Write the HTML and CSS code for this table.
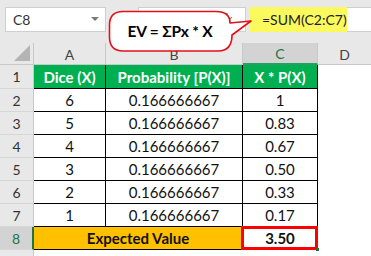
FILE: index.html
```html
<!DOCTYPE html>
<html>
<head>
<meta charset="utf-8">
<link rel="stylesheet" href="styles.css">
</head>
<body>
<div class="app">
  <div class="topbar">
    <div class="namebox"><span>C8</span><span class="arrow"></span></div>
    <div class="fxbox"><span class="fx">fx</span></div>
    <div class="formula"><span class="hl">=SUM(C2:C7)</span></div>
  </div>
  <div class="sheet">
    <div class="corner"><svg width="17" height="17" viewBox="0 0 17 17"><polygon points="0,16 16,0 16,16" fill="#b4b4b4"/></svg></div>
    <div class="colhdr">A</div>
    <div class="colhdr">B</div>
    <div class="colhdr sel">C</div>
    <div class="colhdr last">D</div>

    <div class="rowhdr r1">1</div>
    <div class="cell head r1">Dice (X)</div>
    <div class="cell head r1">Probability [P(X)]</div>
    <div class="cell head r1">X * P(X)</div>
    <div class="blank r1"></div>

    <div class="rowhdr">2</div>
    <div class="cell">6</div>
    <div class="cell">0.166666667</div>
    <div class="cell">1</div>
    <div class="blank"></div>

    <div class="rowhdr">3</div>
    <div class="cell">5</div>
    <div class="cell">0.166666667</div>
    <div class="cell">0.83</div>
    <div class="blank"></div>

    <div class="rowhdr">4</div>
    <div class="cell">4</div>
    <div class="cell">0.166666667</div>
    <div class="cell">0.67</div>
    <div class="blank"></div>

    <div class="rowhdr">5</div>
    <div class="cell">3</div>
    <div class="cell">0.166666667</div>
    <div class="cell">0.50</div>
    <div class="blank"></div>

    <div class="rowhdr">6</div>
    <div class="cell">2</div>
    <div class="cell">0.166666667</div>
    <div class="cell">0.33</div>
    <div class="blank"></div>

    <div class="rowhdr">7</div>
    <div class="cell">1</div>
    <div class="cell">0.166666667</div>
    <div class="cell">0.17</div>
    <div class="blank"></div>

    <div class="rowhdr sel">8</div>
    <div class="cell total">Expected Value</div>
    <div class="cell result">3.50</div>
    <div class="blank"></div>

    <div class="rowhdr"></div>
    <div class="blank"></div>
    <div class="blank"></div>
    <div class="blank"></div>
    <div class="blank"></div>
  </div>

  <div class="callout">
    <svg class="bubble" width="146" height="44" viewBox="0 0 146 44">
      <path d="M15,1.5 H108 Q122,1.5 122,13 L143,11 L124,25 Q124,41 110,41 H15 Q1.5,41 1.5,27 V15 Q1.5,1.5 15,1.5 Z" fill="#fff" stroke="#e3101b" stroke-width="1.6" stroke-linejoin="round"/>
    </svg>
    <span class="ctext">EV = ΣPx * X</span>
  </div>
</div>
</body>
</html>
```

FILE: styles.css
```css
html, body {
  margin: 0;
  padding: 0;
  background: #ffffff;
}
body {
  font-family: Lato, "Open Sans", sans-serif;
  width: 371px;
  height: 256px;
  overflow: hidden;
}
.app {
  position: relative;
  width: 371px;
  height: 256px;
  overflow: hidden;
}
.topbar {
  height: 43px;
  box-sizing: border-box;
  background: #e8e8e8;
  display: flex;
  align-items: flex-start;
  padding-top: 7px;
}
.namebox {
  margin-left: 5px;
  width: 101px;
  height: 25px;
  box-sizing: border-box;
  background: #fff;
  border: 1px solid #cfcfcf;
  display: flex;
  align-items: center;
  justify-content: space-between;
  padding: 0 6px 0 7px;
  font-size: 14px;
  color: #333;
}
.arrow {
  width: 0;
  height: 0;
  border-left: 4px solid transparent;
  border-right: 4px solid transparent;
  border-top: 4px solid #7a7a7a;
  margin-bottom: 2px;
}
.fxbox {
  margin-left: 32px;
  width: 108px;
  height: 25px;
  box-sizing: border-box;
  background: #fff;
  border: 1px solid #cfcfcf;
  display: flex;
  align-items: center;
  justify-content: flex-end;
  padding-right: 13px;
}
.fx {
  font-family: "Liberation Serif", serif;
  font-style: italic;
  font-size: 14px;
  color: #555;
}
.formula {
  margin-left: 4px;
  flex: 1;
  height: 25px;
  box-sizing: border-box;
  background: #fff;
  border-top: 1px solid #cfcfcf;
  border-bottom: 1px solid #cfcfcf;
  display: flex;
}
.hl {
  width: 97px;
  background: #fafa5e;
  box-sizing: border-box;
  padding-left: 12px;
  font-size: 14px;
  color: #222;
  display: flex;
  align-items: center;
  margin-top: -1px;
  margin-bottom: -1px;
}
.sheet {
  display: grid;
  grid-template-columns: 34px 72px 137px 75px 1fr;
  grid-template-rows: 22px 24px repeat(7, 23px) 23px;
}
.sheet > div {
  box-sizing: border-box;
  display: flex;
  align-items: center;
  justify-content: center;
}
.corner {
  background: #e8e8e8;
  border-right: 1px solid #c9c9c9;
  border-bottom: 1px solid #c9c9c9;
  align-items: flex-end !important;
  justify-content: flex-end !important;
  padding: 0 2px 2px 0;
}
.corner svg { display: block; }
.colhdr {
  background: #e8e8e8;
  border-right: 1px solid #c9c9c9;
  border-bottom: 1px solid #c9c9c9;
  font-size: 14px;
  color: #444;
  padding-top: 1px;
}
.colhdr.last { border-right: none; }
.colhdr.sel {
  background: #d3d3d3;
  color: #217346;
  border-bottom: 2px solid #21a366;
}
.rowhdr {
  background: #e8e8e8;
  border-right: 1px solid #c9c9c9;
  border-bottom: 1px solid #d6d6d6;
  font-size: 14px;
  color: #333;
}
.rowhdr.sel {
  background: #d3d3d3;
  color: #217346;
  border-right: 2px solid #217346;
}
.cell {
  border-right: 1px solid #000;
  border-bottom: 1px solid #000;
  font-size: 15px;
  color: #111;
}
.cell.head {
  background: #00b050;
  color: #fff;
  font-weight: 700;
}
.cell.total {
  grid-column: span 2;
  background: #ffc000;
  font-weight: 700;
  color: #111;
}
.cell.result {
  position: relative;
  font-weight: 700;
  color: #111;
}
.cell.result::after {
  content: "";
  position: absolute;
  left: -2px;
  top: -1px;
  right: -1px;
  bottom: -1px;
  border: 3px solid #ff0000;
}
.cell.result::before {
  content: "";
  position: absolute;
  right: -2px;
  bottom: -2px;
  width: 3px;
  height: 3px;
  background: #217346;
  z-index: 2;
}
.blank {
  background: #fff;
}
.callout {
  position: absolute;
  left: 108px;
  top: 10px;
  width: 124px;
  height: 42px;
  display: flex;
  align-items: center;
  justify-content: center;
}
.bubble {
  position: absolute;
  left: 0;
  top: 0;
  overflow: visible;
}
.ctext {
  position: relative;
  font-weight: 700;
  font-size: 15.5px;
  color: #000;
  letter-spacing: -0.2px;
  white-space: nowrap;
}
```
